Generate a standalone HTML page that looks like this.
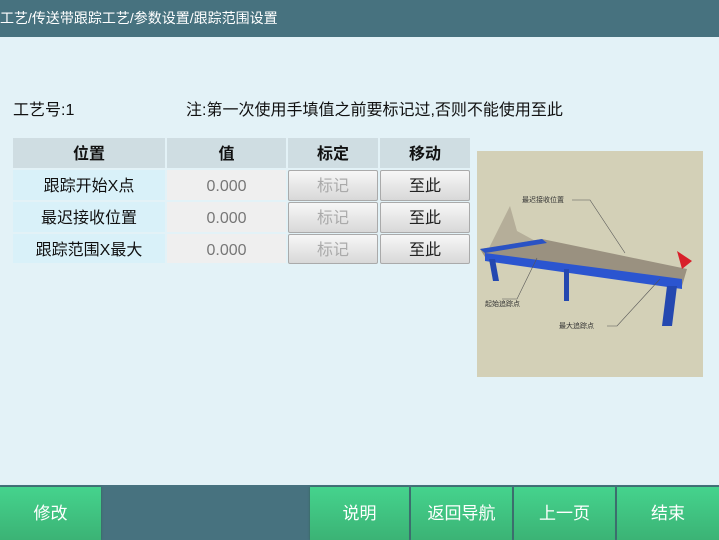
<!DOCTYPE html>
<html><head><meta charset="utf-8"><style>
*{margin:0;padding:0;box-sizing:border-box}
body{width:719px;height:540px;background:#e3f2f7;font-family:"Liberation Sans","Noto Sans CJK SC",sans-serif;position:relative;overflow:hidden}
.t{position:absolute;left:0;top:0;width:719px;height:37px;background:#47727f;color:#fff;font-size:14px;line-height:37px}
.a{position:absolute;font-size:16px;color:#111;line-height:20px}
.c{position:absolute;text-align:center;font-size:16px;line-height:30px;padding-top:2px;white-space:nowrap}
.h{background:#cfdde2;font-weight:bold;color:#111}
.n{background:#d9f1f9;color:#111}
.v{background:#efefef;color:#777}
.b{background:linear-gradient(#f7f7f7,#d8d8d8);border:1px solid #aaa;border-radius:2px;line-height:28px}
.bot{position:absolute;left:0;top:485px;width:719px;height:55px;background:#47727f}
.g{position:absolute;top:487px;height:53px;background:linear-gradient(#45d38d,#3bb375);color:#fff;font-size:17px;line-height:53px;text-align:center;box-shadow:0 0 2px #2d6a55}
</style></head><body>
<div class="t">工艺/传送带跟踪工艺/参数设置/跟踪范围设置</div>
<div class="a" style="left:13px;top:101px">工艺号:1</div>
<div class="a" style="left:186px;top:101px">注:第一次使用手填值之前要标记过,否则不能使用至此</div>
<div class="c h" style="left:13px;top:138px;width:152px;height:30px">位置</div>
<div class="c h" style="left:167px;top:138px;width:119px;height:30px">值</div>
<div class="c h" style="left:288px;top:138px;width:90px;height:30px">标定</div>
<div class="c h" style="left:380px;top:138px;width:90px;height:30px">移动</div>

<div class="c n" style="left:13px;top:170px;width:152px;height:30px">跟踪开始X点</div>
<div class="c v" style="left:167px;top:170px;width:119px;height:30px">0.000</div>
<div class="c b" style="left:288px;top:170px;width:90px;height:31px;color:#aaa">标记</div>
<div class="c b" style="left:380px;top:170px;width:90px;height:31px;color:#222">至此</div>

<div class="c n" style="left:13px;top:202px;width:152px;height:30px">最迟接收位置</div>
<div class="c v" style="left:167px;top:202px;width:119px;height:30px">0.000</div>
<div class="c b" style="left:288px;top:202px;width:90px;height:31px;color:#aaa">标记</div>
<div class="c b" style="left:380px;top:202px;width:90px;height:31px;color:#222">至此</div>

<div class="c n" style="left:13px;top:234px;width:152px;height:29px">跟踪范围X最大</div>
<div class="c v" style="left:167px;top:234px;width:119px;height:29px">0.000</div>
<div class="c b" style="left:288px;top:234px;width:90px;height:30px;color:#aaa">标记</div>
<div class="c b" style="left:380px;top:234px;width:90px;height:30px;color:#222">至此</div>

<svg style="position:absolute;left:477px;top:151px" width="226" height="226" viewBox="0 0 226 226">
<rect width="226" height="226" fill="#d3d0b7"/>
<polygon points="33,55 12,97 62,92 40,80" fill="#a89f8c" opacity="0.7"/>
<polygon points="3,98 65,88 210,118 205,135 8,106" fill="#9a9180"/>
<polygon points="3,98 65,88 70,92 8,102" fill="#2a52c4"/>
<polygon points="8,102 205,128 205,138 8,110" fill="#2b55d0"/>
<polygon points="12,108 18,108 22,130 16,130" fill="#2448b0"/>
<polygon points="87,118 92,118 92,150 87,150" fill="#2448b0"/>
<polygon points="190,135 200,135 195,175 185,175" fill="#2448b0"/>
<polygon points="200,100 215,110 205,118" fill="#d8202a"/>
<polyline points="95,49 113,49 148,102" fill="none" stroke="#555" stroke-width="0.6"/>
<polyline points="25,148 40,148 60,107" fill="none" stroke="#555" stroke-width="0.6"/>
<polyline points="130,175 140,175 183,128" fill="none" stroke="#555" stroke-width="0.6"/>
<text x="45" y="51" font-size="7" fill="#333">最迟接收位置</text>
<text x="8" y="155" font-size="7" fill="#333">起始追踪点</text>
<text x="82" y="177" font-size="7" fill="#333">最大追踪点</text>
</svg>

<div class="bot"></div>
<div class="g" style="left:0;width:101px">修改</div>
<div class="g" style="left:310px;width:99px">说明</div>
<div class="g" style="left:411px;width:101px">返回导航</div>
<div class="g" style="left:514px;width:101px">上一页</div>
<div class="g" style="left:617px;width:102px">结束</div>
</body></html>
